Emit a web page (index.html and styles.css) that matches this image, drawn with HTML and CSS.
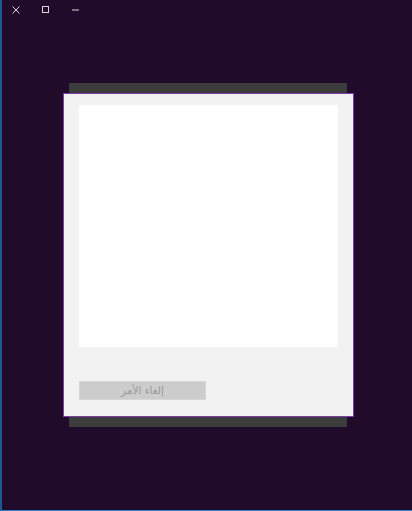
FILE: index.html
```html
<!DOCTYPE html>
<html lang="ar">
<head>
<meta charset="utf-8">
<title>Dialog</title>
<link rel="stylesheet" href="styles.css">
</head>
<body>
<div class="screen">
  <div class="titlebar">
    <span class="tb-btn">
      <svg width="8" height="8" viewBox="0 0 8 8"><path d="M0.5 0.5 L7.5 7.5 M7.5 0.5 L0.5 7.5" stroke="#d8d8d8" stroke-width="1" fill="none"/></svg>
    </span>
    <span class="tb-btn">
      <svg width="7" height="7" viewBox="0 0 7 7"><rect x="0.5" y="0.5" width="6" height="6" stroke="#d8d8d8" stroke-width="1" fill="none"/></svg>
    </span>
    <span class="tb-btn">
      <svg width="7" height="7" viewBox="0 0 7 7"><path d="M0 4 H7" stroke="#d8d8d8" stroke-width="1" fill="none"/></svg>
    </span>
  </div>
  <div class="stage">
    <div class="backpanel">
      <div class="dialog">
        <div class="content"></div>
        <div class="actions">
          <button class="btn" dir="rtl">إلغاء الأمر</button>
        </div>
      </div>
    </div>
  </div>
</div>
</body>
</html>
```
FILE: styles.css
```css
html, body {
  margin: 0;
  padding: 0;
  background: #200c2a;
}
.screen {
  width: 412px;
  height: 511px;
  box-sizing: border-box;
  border-left: 2px solid #1d5896;
  border-bottom: 1px solid #2a7fd0;
  background: #200c2a;
  font-family: "DejaVu Sans", "Noto Sans", sans-serif;
  overflow: hidden;
}
.titlebar {
  display: flex;
  height: 19px;
  align-items: center;
  padding-left: 10px;
  gap: 21.5px;
}
.tb-btn {
  display: flex;
  width: 8px;
  height: 8px;
  align-items: center;
  justify-content: center;
}
.stage {
  padding-top: 64px;
  padding-left: 67px;
}
.backpanel {
  position: relative;
  width: 278px;
  height: 344px;
  background: #3c3c3c;
}
.dialog {
  position: absolute;
  left: -6px;
  top: 10px;
  width: 291px;
  height: 324px;
  box-sizing: border-box;
  border: 1px solid #7b3ea6;
  background: #f2f2f2;
  padding: 11px 15px 0 15px;
  display: flex;
  flex-direction: column;
}
.content {
  height: 242px;
  background: #ffffff;
}
.actions {
  padding-top: 34px;
  display: flex;
}
.btn {
  width: 127px;
  height: 19px;
  margin: 0;
  padding: 0;
  box-sizing: border-box;
  border: 1px solid #d6d6d6;
  background: #cccccc;
  color: #999999;
  font-family: "DejaVu Sans", sans-serif;
  font-size: 10.5px;
  line-height: 17px;
  text-align: center;
}
```
